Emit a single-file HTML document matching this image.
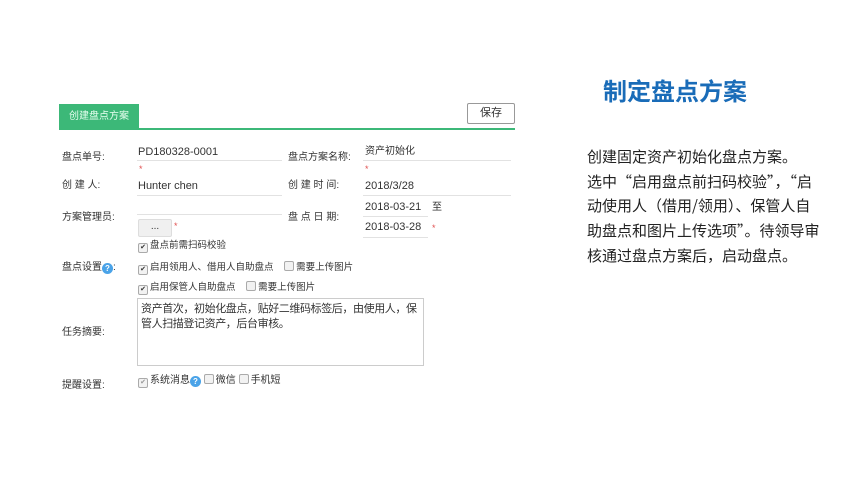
<!DOCTYPE html><html><head><meta charset="utf-8"><style>
body{margin:0;width:860px;height:484px;background:#fff;position:relative;overflow:hidden;font-family:"Liberation Sans","Noto Sans CJK SC",sans-serif;color:#333}
.a{position:absolute;white-space:nowrap;font-size:10px;line-height:12px}
.l{position:absolute;height:1px;background:#e2e2e2}
.s{position:absolute;color:#e05050;font-size:9px}
.cb{display:inline-block;width:8px;height:8px;border:1px solid #aaa;border-radius:2px;background:#f2f2f2;vertical-align:-1px;margin-right:2px;font-size:7px;line-height:8px;text-align:center;color:#333}
.q{display:inline-block;width:11px;height:11px;border-radius:50%;background:#4aa3e8;color:#fff;font-size:8px;line-height:11px;text-align:center;font-weight:bold;vertical-align:-1px}
</style></head><body>
<div class="a" style="left:59px;top:104px;width:80px;height:25px;background:#3cb878;color:#e8fff0;line-height:25px;text-align:center;font-size:10px">创建盘点方案</div>
<div style="position:absolute;left:59px;top:128px;width:456px;height:2px;background:#3cb878"></div>
<div class="a" style="left:467px;top:103px;width:46px;height:19px;border:1px solid #999;border-radius:2px;line-height:19px;text-align:center;font-size:11px">保存</div>

<div class="a" style="left:62px;top:152px">盘点单号:</div>
<div class="a" style="left:138px;top:146px;font-size:11px">PD180328-0001</div>
<div class="l" style="left:137px;top:160px;width:145px"></div>
<div class="s" style="left:139px;top:164px">*</div>
<div class="a" style="left:288px;top:152px">盘点方案名称:</div>
<div class="a" style="left:365px;top:146px">资产初始化</div>
<div class="l" style="left:363px;top:160px;width:148px"></div>
<div class="s" style="left:365px;top:164px">*</div>

<div class="a" style="left:62px;top:180px">创 建 人:</div>
<div class="a" style="left:138px;top:180px;font-size:11px">Hunter chen</div>
<div class="l" style="left:137px;top:195px;width:145px"></div>
<div class="a" style="left:288px;top:180px">创 建 时 间:</div>
<div class="a" style="left:365px;top:180px;font-size:11px">2018/3/28</div>
<div class="l" style="left:363px;top:195px;width:148px"></div>

<div class="a" style="left:62px;top:212px">方案管理员:</div>
<div class="l" style="left:137px;top:214px;width:145px"></div>
<div class="a" style="left:138px;top:219px;width:32px;height:16px;background:#f0f0f0;border:1px solid #ddd;border-radius:2px;text-align:center;line-height:14px">...</div>
<div class="s" style="left:174px;top:221px">*</div>
<div class="a" style="left:288px;top:212px">盘 点 日 期:</div>
<div class="a" style="left:365px;top:201px;font-size:11px">2018-03-21</div>
<div class="l" style="left:363px;top:216px;width:65px"></div>
<div class="a" style="left:432px;top:202px">至</div>
<div class="a" style="left:365px;top:221px;font-size:11px">2018-03-28</div>
<div class="l" style="left:363px;top:237px;width:65px"></div>
<div class="s" style="left:432px;top:223px">*</div>

<div class="a" style="left:138px;top:240px;font-size:9.5px"><span class="cb">✔</span>盘点前需扫码校验</div>
<div class="a" style="left:62px;top:262px">盘点设置<span class="q">?</span>:</div>
<div class="a" style="left:138px;top:261px;font-size:9.5px"><span class="cb">✔</span>启用领用人、借用人自助盘点 &nbsp;&nbsp; <span class="cb"></span>需要上传图片</div>
<div class="a" style="left:138px;top:281px;font-size:9.5px"><span class="cb">✔</span>启用保管人自助盘点 &nbsp;&nbsp; <span class="cb"></span>需要上传图片</div>

<div style="position:absolute;left:137px;top:298px;width:287px;height:68px;border:1px solid #ccc;box-sizing:border-box"></div>
<div class="a" style="left:141px;top:301px;font-size:11px;letter-spacing:-0.4px;line-height:15px;font-family:'Noto Sans CJK SC',sans-serif">资产首次，初始化盘点，贴好二维码标签后，由使用人，保<br>管人扫描登记资产，后台审核。</div>
<div class="a" style="left:62px;top:327px">任务摘要:</div>

<div class="a" style="left:138px;top:374px;font-size:10px"><span class="cb" style="color:#999">✔</span>系统消息<span class="q">?</span> <span class="cb"></span>微信 <span class="cb"></span>手机短</div>
<div class="a" style="left:62px;top:380px">提醒设置:</div>

<div class="a" style="left:603px;top:78px;font-size:24px;line-height:30px;font-weight:bold;color:#1a6cb8">制定盘点方案</div>
<div style="position:absolute;left:587px;top:145px;width:260px;font-size:15px;line-height:24.7px;color:#222;white-space:nowrap;font-family:'Noto Sans CJK SC',sans-serif">创建固定资产初始化盘点方案。<br>选中“启用盘点前扫码校验”，“启<br>动使用人（借用/领用）、保管人自<br>助盘点和图片上传选项”。待领导审<br>核通过盘点方案后，启动盘点。</div>
</body></html>
